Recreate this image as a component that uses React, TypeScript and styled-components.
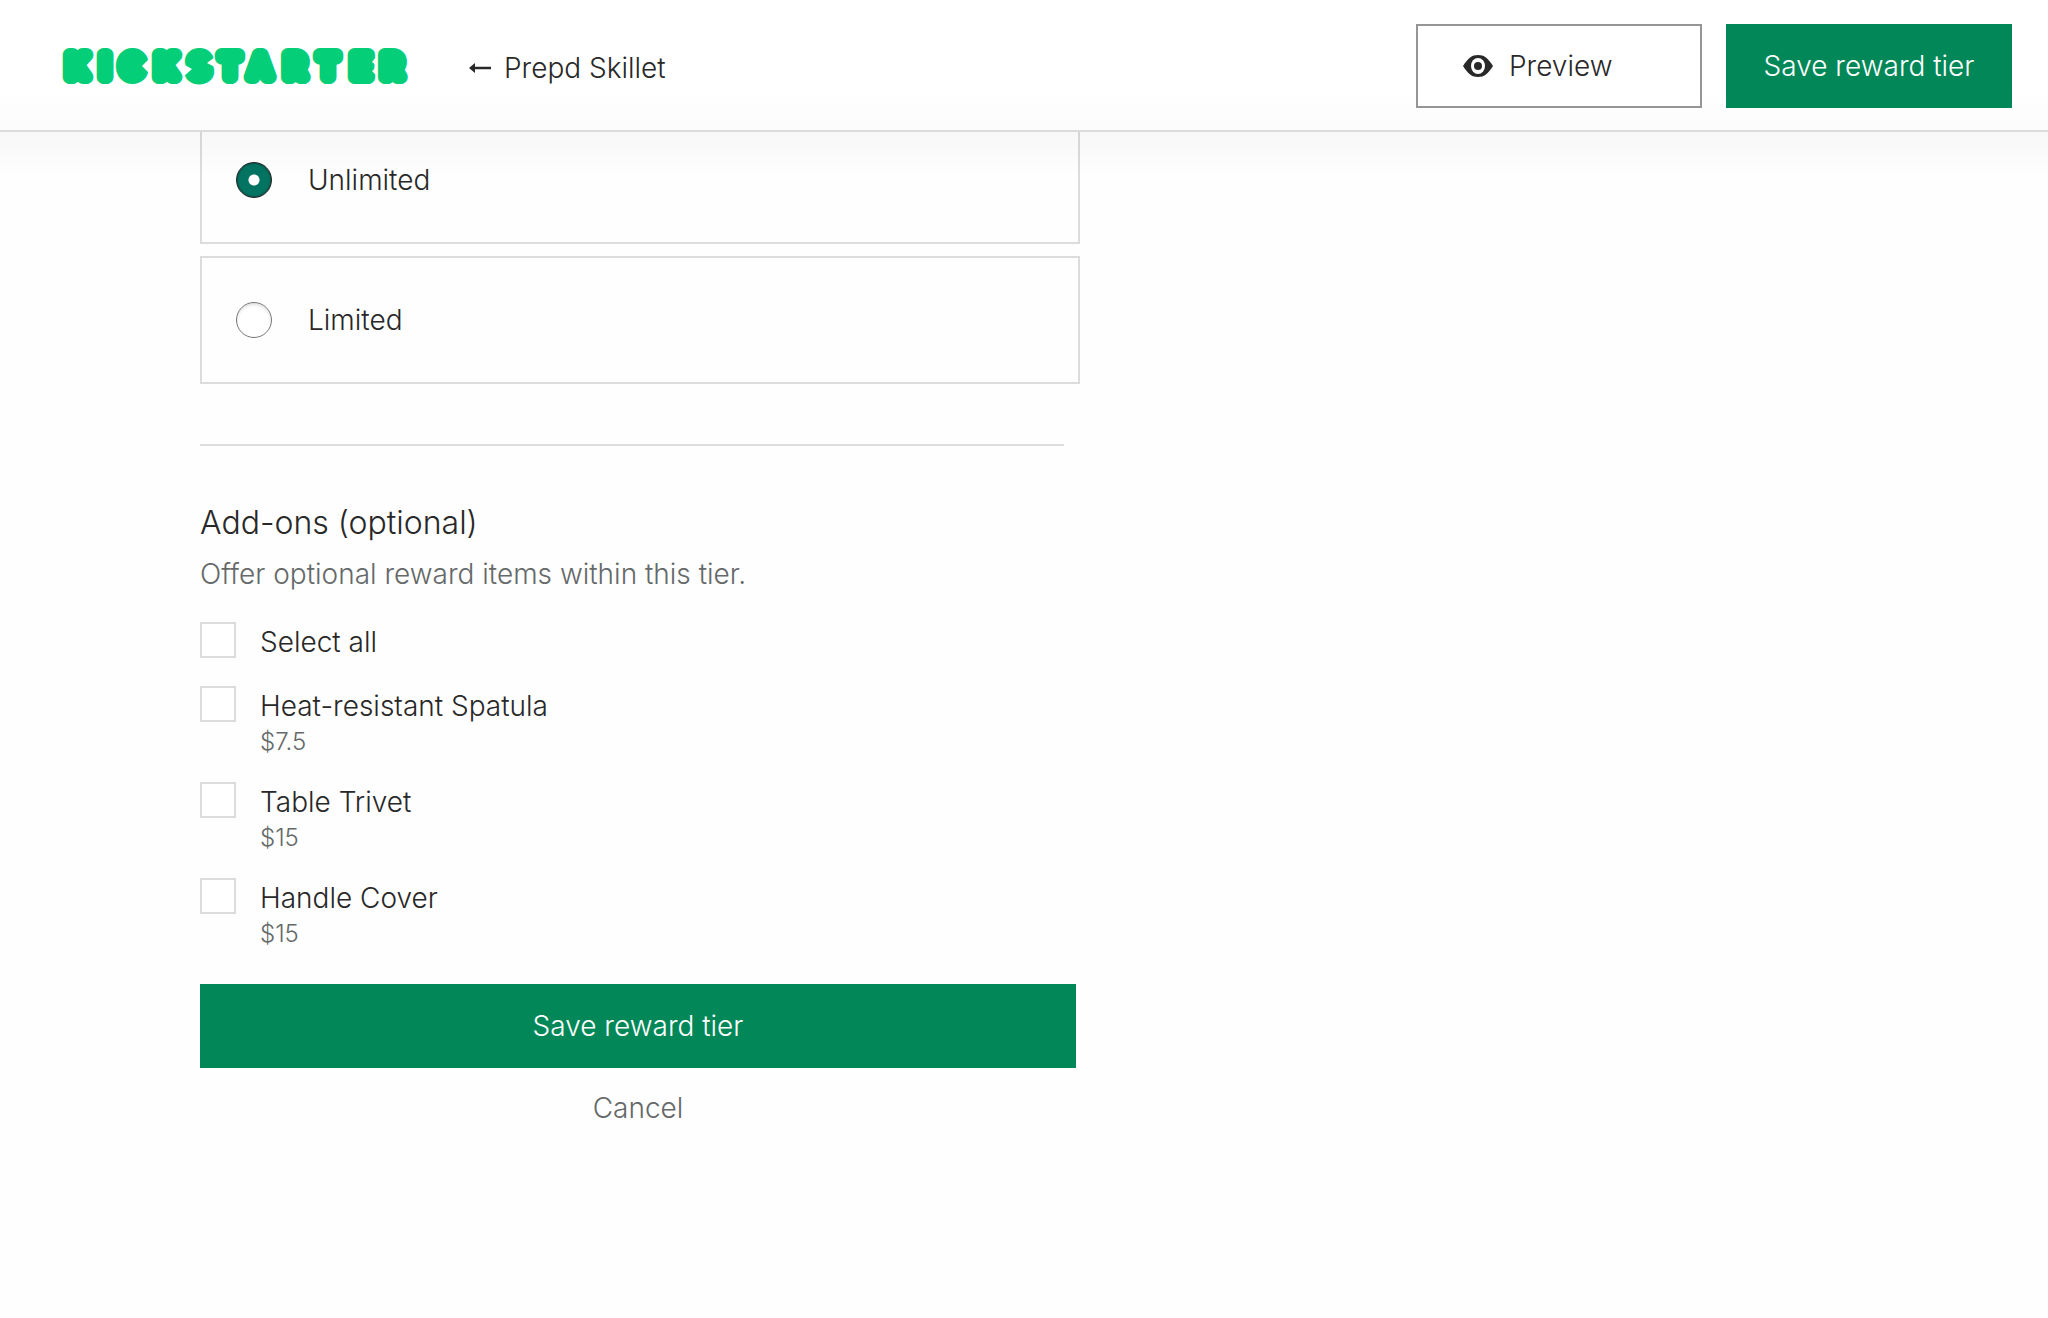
import React from 'react';
import styled, { createGlobalStyle, css } from 'styled-components';

const color = {
  ink: '#282828',
  muted: '#656969',
  line: '#dcdcdc',
  outline: '#959595',
  green: '#028858',
  radio: '#037362',
  logo: '#05ce78',
};

const GlobalStyle = createGlobalStyle`
  *, *::before, *::after { box-sizing: border-box; }
  body {
    margin: 0;
    background: #fefefe;
    color: ${color.ink};
    font-family: Inter, "Liberation Sans", sans-serif;
    font-size: 28px;
    font-weight: 340;
    line-height: 36px;
  }
  button, input { font: inherit; margin: 0; }
`;

const Header = styled.header`
  position: fixed;
  inset: 0 0 auto 0;
  z-index: 1;
  display: flex;
  align-items: center;
  min-height: 132px;
  padding: 2px 36px 0 60px;
  background: linear-gradient(#fff 70%, #fbfbfb);
  border-bottom: 2px solid ${color.line};
`;

const HeaderShade = styled.div`
  position: absolute;
  inset: 100% 0 auto 0;
  height: 44px;
  margin-top: 2px;
  background: linear-gradient(rgba(0, 0, 0, 0.024), rgba(0, 0, 0, 0.016) 45%, transparent);
  pointer-events: none;
`;

const LogoLink = styled.a`
  display: flex;
`;

const Wordmark = styled.svg`
  display: block;

  text {
    font: 400 30px Inter, sans-serif;
    text-anchor: middle;
    fill: ${color.logo};
    stroke: ${color.logo};
    stroke-width: 14px;
    stroke-linejoin: round;
  }
`;

const BackLink = styled.a`
  display: flex;
  align-items: center;
  gap: 12px;
  margin-left: 58px;
  padding-top: 4px;
  color: inherit;
  text-decoration: none;
`;

const Actions = styled.div`
  display: flex;
  gap: 24px;
  margin-left: auto;
`;

const Button = styled.button<{ $variant: 'solid' | 'outline'; $wide?: boolean }>`
  display: flex;
  align-items: center;
  gap: 16px;
  height: 84px;
  padding: 0 32px;
  border: 2px solid;
  white-space: nowrap;
  cursor: pointer;
  ${({ $wide }) => ($wide ? 'width: 100%;' : 'width: 286px;')}
  ${({ $variant }) =>
    $variant === 'solid'
      ? css`
          justify-content: center;
          color: #fff;
          background: ${color.green};
          border-color: ${color.green};
        `
      : css`
          padding-left: 45px;
          color: ${color.ink};
          background: #fff;
          border-color: ${color.outline};
        `}
`;

const Main = styled.main`
  max-width: 1080px;
  padding: 116px 0 80px 200px;
`;

const Choices = styled.fieldset`
  display: grid;
  gap: 12px;
  margin: 0;
  padding: 0;
  border: 0;
`;

const ChoiceCard = styled.label`
  display: flex;
  align-items: center;
  gap: 36px;
  height: 128px;
  padding: 0 34px;
  border: 2px solid ${color.line};
  cursor: pointer;
`;

const Radio = styled.input`
  appearance: none;
  flex: none;
  width: 36px;
  height: 36px;
  border: 1px solid #777;
  border-radius: 50%;
  background: #fff;
  box-shadow: inset 0 2px 3px rgba(0, 0, 0, 0.12);

  &:checked {
    border-color: #222;
    background: radial-gradient(circle, #fff 0 5px, ${color.radio} 6px);
    box-shadow: inset 0 0 2px #222;
  }
`;

const Divider = styled.hr`
  height: 2px;
  margin: 60px 16px 57px 0;
  border: 0;
  background: ${color.line};
`;

const Title = styled.h2`
  margin: 0;
  font-size: 32px;
  font-weight: inherit;
  line-height: 40px;
`;

const Hint = styled.p`
  margin: 13px 0 30px;
  color: ${color.muted};
`;

const AddOnList = styled.ul`
  display: grid;
  gap: 22px;
  margin: 0;
  padding: 0;
  list-style: none;
`;

const AddOn = styled.label`
  display: flex;
  align-items: flex-start;
  gap: 24px;
  width: fit-content;
  min-height: 42px;
  cursor: pointer;
`;

const Checkbox = styled.input`
  appearance: none;
  flex: none;
  width: 36px;
  height: 36px;
  border: 2px solid ${color.line};
  background: #fff;

  &:checked {
    border-color: ${color.green};
    background: ${color.green};
  }
`;

const AddOnText = styled.span`
  display: grid;
  padding-top: 2px;
`;

const Price = styled.span`
  color: ${color.muted};
  font-size: 24px;
  line-height: 36px;
`;

const FormActions = styled.div`
  display: grid;
  gap: 22px;
  margin: 32px 4px 0 0;
`;

const CancelButton = styled.button`
  justify-self: center;
  padding: 0;
  border: 0;
  color: ${color.muted};
  background: none;
  cursor: pointer;
`;

const Logo = () => (
  <Wordmark width="350" height="36" viewBox="59 48 350 36" overflow="visible" aria-label="Kickstarter">
    <text x="76 104 131 165 198 229 259 294 327 360 391" y="77">
      KICKSTARTER
    </text>
    {/* bites taken out of the sides of C, S and E */}
    <g fill="#fff">
      <path d="M149 58 L141 66 L149 74 Z" />
      <path d="M182 64 L191 69 L182 77 Z" />
      <path d="M214 57 L206 63 L214 67 Z" />
      <path d="M375 57 L371 62 L375 65 Z M375 68 L371 71 L375 75 Z" />
    </g>
  </Wordmark>
);

const ArrowLeft = () => (
  <svg width="24" height="12" viewBox="0 0 24 12" fill={color.ink} aria-hidden="true">
    <path d="M1 6 L7 1 V4.7 H23 V7.3 H7 V11 Z" />
  </svg>
);

const Eye = () => (
  <svg width="30" height="22" viewBox="0 0 30 22" aria-hidden="true">
    <path d="M0 11 C5 3 9 0 15 0 S25 3 30 11 C25 19 21 22 15 22 S5 19 0 11Z" fill={color.ink} />
    <ellipse cx="15" cy="11" rx="7" ry="8" fill="#fff" />
    <circle cx="15" cy="11" r="4" fill={color.ink} />
  </svg>
);

const addOns = [
  { id: 'all', name: 'Select all' },
  { id: 'spatula', name: 'Heat-resistant Spatula', price: '$7.5' },
  { id: 'trivet', name: 'Table Trivet', price: '$15' },
  { id: 'cover', name: 'Handle Cover', price: '$15' },
];

export default function App() {
  return (
    <>
      <GlobalStyle />
      <Header>
        <LogoLink href="#home">
          <Logo />
        </LogoLink>
        <BackLink href="#project">
          <ArrowLeft />
          Prepd Skillet
        </BackLink>
        <Actions>
          <Button type="button" $variant="outline">
            <Eye />
            Preview
          </Button>
          <Button type="submit" form="reward" $variant="solid">
            Save reward tier
          </Button>
        </Actions>
        <HeaderShade />
      </Header>
      <Main>
        <form id="reward" onSubmit={(event) => event.preventDefault()}>
          <Choices aria-label="Quantity">
            <ChoiceCard>
              <Radio type="radio" name="quantity" value="unlimited" defaultChecked />
              Unlimited
            </ChoiceCard>
            <ChoiceCard>
              <Radio type="radio" name="quantity" value="limited" />
              Limited
            </ChoiceCard>
          </Choices>
          <Divider />
          <Title>Add-ons (optional)</Title>
          <Hint>Offer optional reward items within this tier.</Hint>
          <AddOnList>
            {addOns.map(({ id, name, price }) => (
              <li key={id}>
                <AddOn>
                  <Checkbox type="checkbox" name={id} />
                  <AddOnText>
                    {name}
                    {price && <Price>{price}</Price>}
                  </AddOnText>
                </AddOn>
              </li>
            ))}
          </AddOnList>
          <FormActions>
            <Button type="submit" $variant="solid" $wide>
              Save reward tier
            </Button>
            <CancelButton type="button">Cancel</CancelButton>
          </FormActions>
        </form>
      </Main>
    </>
  );
}
